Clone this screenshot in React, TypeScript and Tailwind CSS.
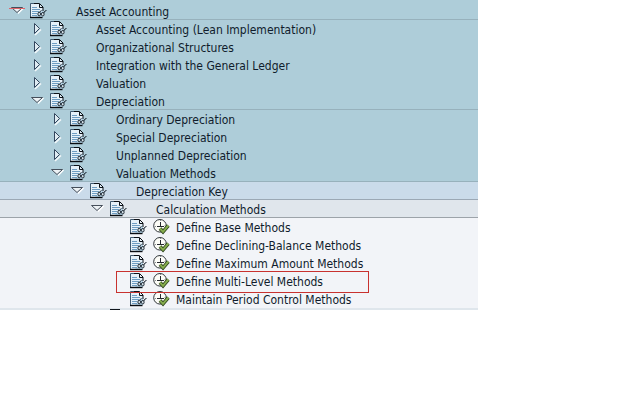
import { useState } from 'react'

interface TreeNode {
  id: string
  label: string
  level: number
  open?: boolean
  leaf?: boolean
  current?: boolean
  marked?: boolean
  row: string
}

const BLUE = 'bg-[#aecdd9]'
const BLUE_LINE = 'bg-[#aecdd9] border-b border-[#97b1bc]'
const LEAF = 'bg-[#f2f4f8]'

const nodes: TreeNode[] = [
  { id: 'aa', label: 'Asset Accounting', level: 0, open: true, marked: true, row: BLUE_LINE },
  { id: 'lean', label: 'Asset Accounting (Lean Implementation)', level: 1, row: BLUE },
  { id: 'org', label: 'Organizational Structures', level: 1, row: BLUE },
  { id: 'gl', label: 'Integration with the General Ledger', level: 1, row: BLUE },
  { id: 'val', label: 'Valuation', level: 1, row: BLUE },
  { id: 'dep', label: 'Depreciation', level: 1, open: true, row: BLUE_LINE },
  { id: 'ord', label: 'Ordinary Depreciation', level: 2, row: BLUE },
  { id: 'spec', label: 'Special Depreciation', level: 2, row: BLUE },
  { id: 'unpl', label: 'Unplanned Depreciation', level: 2, row: BLUE },
  { id: 'vm', label: 'Valuation Methods', level: 2, open: true, row: BLUE_LINE },
  { id: 'key', label: 'Depreciation Key', level: 3, open: true, row: 'bg-[#cadbea] border-b border-[#9ba8b5]' },
  { id: 'calc', label: 'Calculation Methods', level: 4, open: true, row: 'bg-[#e0e6ec] border-b border-[#9ca3a9]' },
  { id: 'base', label: 'Define Base Methods', level: 5, leaf: true, row: LEAF },
  { id: 'decl', label: 'Define Declining-Balance Methods', level: 5, leaf: true, row: LEAF },
  { id: 'max', label: 'Define Maximum Amount Methods', level: 5, leaf: true, row: LEAF },
  { id: 'multi', label: 'Define Multi-Level Methods', level: 5, leaf: true, current: true, row: LEAF },
  { id: 'period', label: 'Maintain Period Control Methods', level: 5, leaf: true, row: LEAF },
]

const indents = ['pl-[9px]', 'pl-[29px]', 'pl-[49px]', 'pl-[69px]', 'pl-[89px]', 'pl-[109px]']

function Arrow({ open, marked }: { open?: boolean; marked?: boolean }) {
  return (
    <svg width="17" height="16" viewBox="0 0 17 16" aria-hidden="true">
      {open ? (
        <>
          <path d="M14.5 5L9 10.5" stroke="#fff" strokeWidth="1.5" fill="none" />
          <path d="M2.5 4.5H13.5L8 9.5Z" fill="#edf2f5" stroke="#454e5a" />
        </>
      ) : (
        <>
          <path d="M6 14L12 8.5" stroke="#f4f8fa" strokeWidth="1.5" />
          <path d="M5.5 2.5L10.5 7.5L5.5 12.5Z" fill="#dfebf2" stroke="#33465e" />
        </>
      )}
      {marked && <path d="M0 5.5H16" stroke="#e0656c" />}
    </svg>
  )
}

function DocIcon() {
  return (
    <svg width="17" height="16" viewBox="0 0 17 16" aria-hidden="true">
      <path d="M1 1H9L13 5V14H1Z" fill="#e6f1f9" />
      <path d="M13 6V14H5Z" fill="#b9d7ea" />
      <path d="M.5 14V.5H9" stroke="#415a70" fill="none" />
      <path d="M4 .5H9.5L13 4V8" stroke="#0c1016" fill="none" />
      <path d="M9.5 1V4.5H13" stroke="#0c1016" fill="none" />
      <path d="M2 4.5H7M2 6.5H10M2 8.5H9M2 10.5H7M2 12.5H7" stroke="#6f9dc2" />
      <path d="M0 14.5H12.5" stroke="#080b10" strokeWidth="1.4" />
      <ellipse cx="9.2" cy="11" rx="1.3" ry="1.8" fill="#e3f0f7" stroke="#1c2630" />
      <ellipse cx="12.8" cy="11.2" rx="1.3" ry="1.8" fill="#e3f0f7" stroke="#1c2630" />
      <path d="M9.5 9L11.5 7.5M13.8 10L15 8L16.5 7.5" stroke="#1c2630" fill="none" />
    </svg>
  )
}

function ExecuteIcon() {
  return (
    <svg width="17" height="16" viewBox="0 0 17 16" aria-hidden="true">
      <circle cx="7" cy="6.8" r="6.3" fill="#fdfdf8" stroke="#30353a" />
      <path d="M7.5 3V7.5M4 7.5H11" stroke="#25292e" />
      <path d="M7.5 1V2M2 7.5H3M11.5 6.5H12.5M7.5 11V12" stroke="#8b8f93" />
      <path d="M7 9.5L10 12.8L15.3 6.5" stroke="#2c431b" strokeWidth="3.6" fill="none" />
      <path d="M7 9.5L10 12.8L15.3 6.5" stroke="#86ad4e" strokeWidth="2" fill="none" />
    </svg>
  )
}

function isHidden(index: number, closed: string[]) {
  let level = nodes[index].level
  for (let i = index - 1; i >= 0; i--) {
    if (nodes[i].level < level) {
      if (closed.includes(nodes[i].id)) return true
      level = nodes[i].level
    }
  }
  return false
}

export default function App() {
  const [closed, setClosed] = useState<string[]>([])

  const toggle = (id: string) =>
    setClosed(prev => (prev.includes(id) ? prev.filter(x => x !== id) : [...prev, id]))

  return (
    <main className="min-h-screen bg-white">
      <div className="w-full max-w-[478px] bg-[#aecdd9] pt-0.5 font-['DejaVu_Sans_Condensed','DejaVu_Sans',sans-serif] text-[12px] leading-[18px] text-[#101c2c]">
        <ul>
          {nodes.map((node, i) => {
            if (isHidden(i, closed)) return null
            const open = node.open && !closed.includes(node.id)
            return (
              <li key={node.id} className={`relative flex h-[18px] items-center ${indents[node.level]} ${node.row}`}>
                {node.leaf ? (
                  <span className="w-[21px] shrink-0" />
                ) : (
                  <button
                    type="button"
                    aria-expanded={!!open}
                    aria-label={`Toggle ${node.label}`}
                    className="w-[21px] shrink-0"
                    onClick={() => toggle(node.id)}
                  >
                    <Arrow open={open} marked={node.marked} />
                  </button>
                )}
                <button type="button" aria-label={`Documentation for ${node.label}`} className="w-[23px] shrink-0">
                  <DocIcon />
                </button>
                {node.leaf ? (
                  <button type="button" aria-label={`Execute ${node.label}`} className="w-[23px] shrink-0">
                    <ExecuteIcon />
                  </button>
                ) : (
                  <span className="w-[23px] shrink-0" />
                )}
                <span className="pt-0.5 whitespace-nowrap">{node.label}</span>
                {node.current && (
                  <span className="pointer-events-none absolute -top-px left-[116px] z-10 h-[22px] w-[253px] border border-[#c8322f]" />
                )}
              </li>
            )
          })}
        </ul>
        {/* next row, cut off by the panel edge */}
        <div className="flex h-0.5 items-end bg-[#dfe6ec] pl-[110px]">
          <div className="h-px w-2.5 bg-[#10151c]" />
        </div>
      </div>
    </main>
  )
}
